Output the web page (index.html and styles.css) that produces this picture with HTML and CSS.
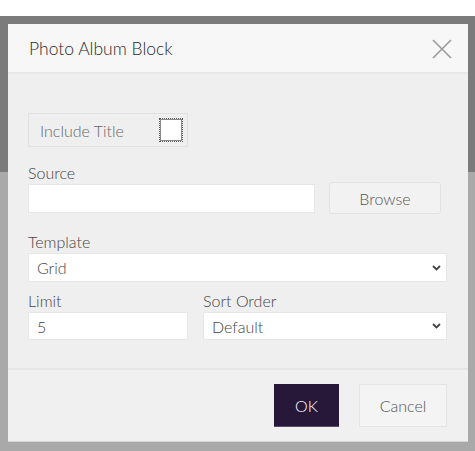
FILE: index.html
```html
<!DOCTYPE html>
<html>
<head>
<meta charset="utf-8">
<link rel="stylesheet" href="styles.css">
</head>
<body>
<div class="topstrip"></div>
<div class="stage">
  <div class="dialog">
    <div class="header">
      <span class="title">Photo Album Block</span>
      <svg class="close" width="20" height="20" viewBox="0 0 20 20"><path d="M1 1 L19 19 M19 1 L1 19" stroke="#9a9a9a" stroke-width="1.6" fill="none"/></svg>
    </div>
    <div class="body">
      <div class="include">
        <span class="include-label">Include Title</span>
        <span class="checkbox"></span>
      </div>
      <div class="field">
        <label class="lbl">Source</label>
        <div class="source-row">
          <div class="input source-input"></div>
          <div class="browse">Browse</div>
        </div>
      </div>
      <div class="field">
        <label class="lbl">Template</label>
        <div class="input select">Grid<svg class="chev" width="9" height="6" viewBox="0 0 9 6"><path d="M1 1 L4.5 4.5 L8 1" stroke="#444" stroke-width="1.8" fill="none"/></svg></div>
      </div>
      <div class="pair">
        <div class="field limit">
          <label class="lbl">Limit</label>
          <div class="input">5</div>
        </div>
        <div class="field sort">
          <label class="lbl">Sort Order</label>
          <div class="input select">Default<svg class="chev" width="9" height="6" viewBox="0 0 9 6"><path d="M1 1 L4.5 4.5 L8 1" stroke="#444" stroke-width="1.8" fill="none"/></svg></div>
        </div>
      </div>
    </div>
    <div class="footer">
      <div class="btn ok">OK</div>
      <div class="btn cancel">Cancel</div>
    </div>
  </div>
</div>
</body>
</html>
```
FILE: styles.css
```css
* { box-sizing: border-box; }
html, body { margin: 0; padding: 0; }
body {
  width: 475px;
  height: 451px;
  overflow: hidden;
  font-family: Lato, "Open Sans", sans-serif;
  font-weight: 300;
  background: #a9a9a9;
}
.topstrip { height: 16px; background: #fff; }
.stage {
  height: 435px;
  padding: 8px 7px 0 8px;
  background: linear-gradient(to bottom, #7b7b7b 0, #7b7b7b 156px, #a9a9a9 156px, #a9a9a9 100%);
}
.dialog {
  width: 460px;
  background: #efefef;
  box-shadow: 0 1px 0 #d6d6d6;
}
.header {
  height: 50px;
  background: #f7f7f7;
  border-bottom: 2px solid #e8e8e8;
  display: flex;
  align-items: center;
  justify-content: space-between;
  padding: 1px 16px 0 21px;
}
.title { font-size: 17.5px; color: #2a2a2a; }
.close { display: block; margin-top: 1px; }
.body {
  padding: 39px 21px 28px 20px;
  border-bottom: 2px solid #e6e6e6;
}
.include {
  width: 160px;
  height: 34px;
  border: 1px solid #e1e1e1;
  display: flex;
  align-items: center;
  justify-content: space-between;
  padding: 0 4px 0 11px;
}
.include-label { font-size: 16px; color: #666; }
.checkbox {
  width: 24px;
  height: 24px;
  background: #fff;
  border: 1px dotted #555;
  box-shadow: inset 0 0 0 1px #888;
}
.field { margin-top: 17px; }
.lbl { display: block; font-size: 16px; color: #444; line-height: 18px; margin-bottom: 2px; }
.input {
  height: 29px;
  background: #fff;
  border: 1px solid #e6e6e6;
  font-size: 16px;
  color: #444;
  display: flex;
  align-items: center;
  padding: 0 5px 0 8px;
}
.source-row { display: flex; align-items: flex-start; gap: 14px; margin-top: -2px; }
.source-input { width: 287px; margin-top: 2px; }
.browse {
  width: 112px;
  height: 32px;
  background: #f2f2f2;
  border: 1px solid #e2e2e2;
  border-radius: 3px;
  font-size: 16px;
  color: #555;
  display: flex;
  align-items: center;
  justify-content: center;
}
.field + .field { margin-top: 19px; }
.select { justify-content: space-between; }
.chev { display: block; }
.pair { display: flex; gap: 15px; }
.pair .field { margin-top: 10px; }
.limit { width: 160px; }
.sort { flex: 1; }
.pair .input { height: 28px; }
.footer {
  height: 71px;
  background: #f0f0f0;
  display: flex;
  justify-content: flex-end;
  align-items: flex-start;
  gap: 20px;
  padding: 14px 21px 0 0;
}
.btn {
  height: 43px;
  font-size: 16px;
  display: flex;
  align-items: center;
  justify-content: center;
}
.ok { width: 65px; background: #27183a; color: #fff; border-bottom: 1px solid #5a4a6a; }
.cancel { width: 88px; background: #f4f4f4; border: 1px solid #e4e4e4; color: #555; }
```
